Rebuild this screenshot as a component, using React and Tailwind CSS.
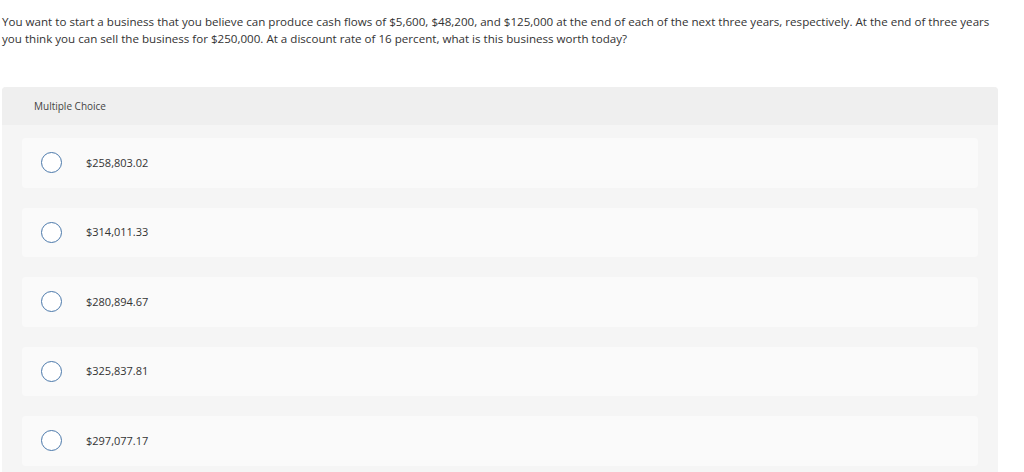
const choices = ['$258,803.02', '$314,011.33', '$280,894.67', '$325,837.81', '$297,077.17']

function Radio() {
  return <span className="block w-[21px] h-[21px] shrink-0 rounded-full border-[1.5px] border-[#4a78aa] bg-white" />
}

export default function App() {
  return (
    <div className="w-[1024px] h-[472px] overflow-hidden bg-white font-['Open_Sans',sans-serif] text-[#333]">
      <p className="pl-[2px] pr-[22px] pt-[13px] text-[11.6px] leading-[17px]">
        You want to start a business that you believe can produce cash flows of $5,600, $48,200, and $125,000 at the end of each of the next three years, respectively. At the end of three years you think you can sell the business for $250,000. At a discount rate of 16 percent, what is this business worth today?
      </p>

      <div className="mt-[40px] ml-[2px] mr-[26px] bg-[#f5f5f5] rounded-t-sm">
        <div className="h-[38px] flex items-center pl-[32px] bg-[#efefef] text-[10px] text-[#444] rounded-t-sm">
          Multiple Choice
        </div>
        <div className="px-[20px] pt-[13px] pb-[20px] flex flex-col gap-[20px]">
          {choices.map((c) => (
            <div key={c} className="h-[49.5px] flex items-center pl-[19px] bg-[#fafafa] rounded-sm">
              <Radio />
              <span className="ml-[24px] text-[11px] text-[#333]">{c}</span>
            </div>
          ))}
        </div>
      </div>
    </div>
  )
}
